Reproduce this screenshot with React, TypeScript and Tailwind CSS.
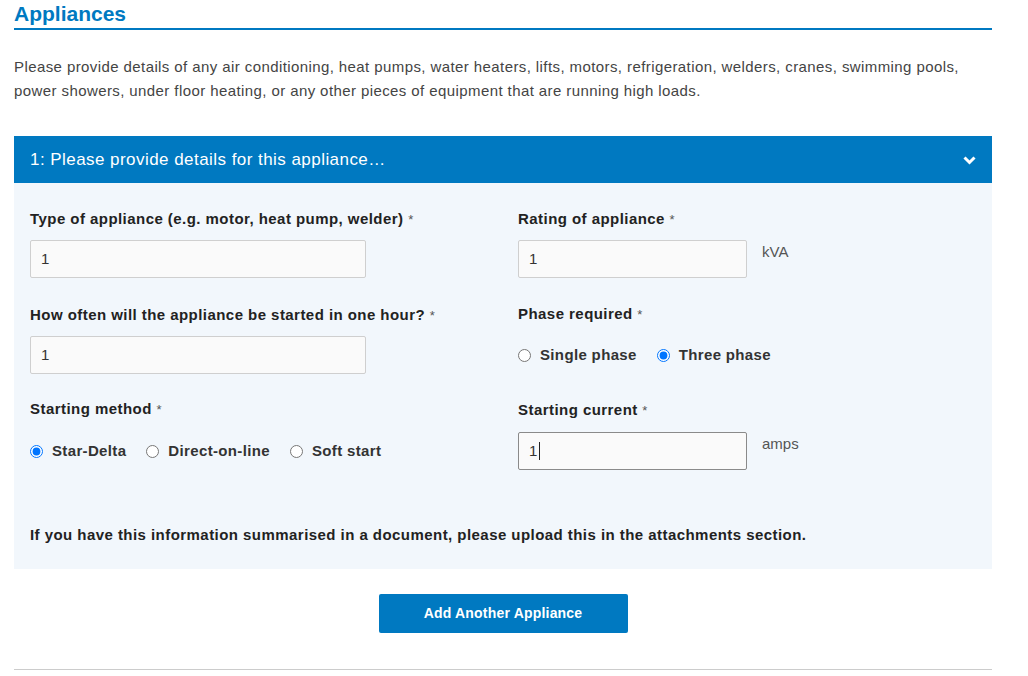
import React from 'react';

const BLUE = 'bg-[#0079c1]';

function Label({ text }: { text: string }) {
  return (
    <div className="h-5 leading-5 text-[15px] font-bold text-[#222]">
      {text} <span className="font-normal text-[13px] text-[#555]">*</span>
    </div>
  );
}

function TextBox({ value, width, focused = false }: { value: string; width: string; focused?: boolean }) {
  return (
    <div
      className={`h-[38px] ${width} flex items-center pl-[10px] bg-[#fafafa] border rounded-[2px] text-[15px] text-[#333] ${
        focused ? 'border-[#8a8a8a]' : 'border-[#cfcfcf]'
      }`}
    >
      {value}
      {focused && <span className="ml-[1px] w-px h-[18px] bg-[#222]" />}
    </div>
  );
}

function Radio({ label, checked }: { label: string; checked?: boolean }) {
  return (
    <label className="flex items-center gap-[9px] text-[15px] font-bold text-[#333] tracking-[0.35px]">
      <input type="radio" readOnly checked={!!checked} className="m-0 w-[13px] h-[13px] accent-[#0075ff]" />
      {label}
    </label>
  );
}

export default function App() {
  return (
    <div className="w-[1028px] h-[676px] bg-white font-['Liberation_Sans',Arial,sans-serif] tracking-[0.45px] overflow-hidden">
      <div className="ml-[14px] w-[978px]">
        <h2 className="h-[30px] pt-[2px] border-b-2 border-[#0079c1] text-[21px] leading-6 font-bold text-[#0079c1] tracking-normal">
          Appliances
        </h2>

        <p className="mt-[25px] text-[15px] leading-6 text-[#444] tracking-[0.41px]">
          Please provide details of any air conditioning, heat pumps, water heaters, lifts, motors, refrigeration, welders, cranes, swimming pools,
          power showers, under floor heating, or any other pieces of equipment that are running high loads.
        </p>

        <div className="mt-[33px]">
          <div className={`${BLUE} h-[47px] flex items-center justify-between pl-4 pr-[16px]`}>
            <span className="text-[17px] text-white">1: Please provide details for this appliance…</span>
            <svg width="13" height="9" viewBox="0 0 13 9" className="mt-[2px]">
              <polyline points="1.5,1.5 6.5,6.5 11.5,1.5" fill="none" stroke="white" strokeWidth="3" />
            </svg>
          </div>

          <div className="bg-[#f2f7fc] pt-[26px] pb-[24px] pl-4">
            <div className="grid grid-cols-[487px_1fr]">
              {/* row 1 */}
              <div className="pb-[27px]">
                <Label text="Type of appliance (e.g. motor, heat pump, welder)" />
                <div className="mt-[11px]">
                  <TextBox value="1" width="w-[336px]" />
                </div>
              </div>
              <div className="pb-[27px] pl-px">
                <Label text="Rating of appliance" />
                <div className="mt-[11px] flex items-start gap-[15px]">
                  <TextBox value="1" width="w-[229px]" />
                  <span className="mt-[2px] text-[15px] leading-5 text-[#555] tracking-normal">kVA</span>
                </div>
              </div>

              {/* row 2 */}
              <div className="pb-[25px]">
                <Label text="How often will the appliance be started in one hour?" />
                <div className="mt-[11px]">
                  <TextBox value="1" width="w-[336px]" />
                </div>
              </div>
              <div className="pb-[25px] pl-px -mt-px">
                <Label text="Phase required" />
                <div className="mt-[20px] flex items-center gap-[20px]">
                  <Radio label="Single phase" />
                  <Radio label="Three phase" checked />
                </div>
              </div>

              {/* row 3 */}
              <div>
                <Label text="Starting method" />
                <div className="mt-[21px] flex items-center gap-[20px]">
                  <Radio label="Star-Delta" checked />
                  <Radio label="Direct-on-line" />
                  <Radio label="Soft start" />
                </div>
              </div>
              <div className="pl-px mt-px">
                <Label text="Starting current" />
                <div className="mt-[12px] flex items-start gap-[15px]">
                  <TextBox value="1" width="w-[229px]" focused />
                  <span className="mt-[2px] text-[15px] leading-5 text-[#555] tracking-normal">amps</span>
                </div>
              </div>
            </div>

            <p className="mt-[55px] h-5 leading-5 text-[15px] font-bold text-[#222]">
              If you have this information summarised in a document, please upload this in the attachments section.
            </p>
          </div>
        </div>

        <div className="mt-[25px] flex justify-center">
          <button className={`${BLUE} w-[249px] h-[39px] rounded-[2px] text-white text-[14px] font-bold tracking-[0.2px]`}>
            Add Another Appliance
          </button>
        </div>

        <hr className="mt-[36px] border-0 border-t border-[#cccccc]" />
      </div>
    </div>
  );
}
